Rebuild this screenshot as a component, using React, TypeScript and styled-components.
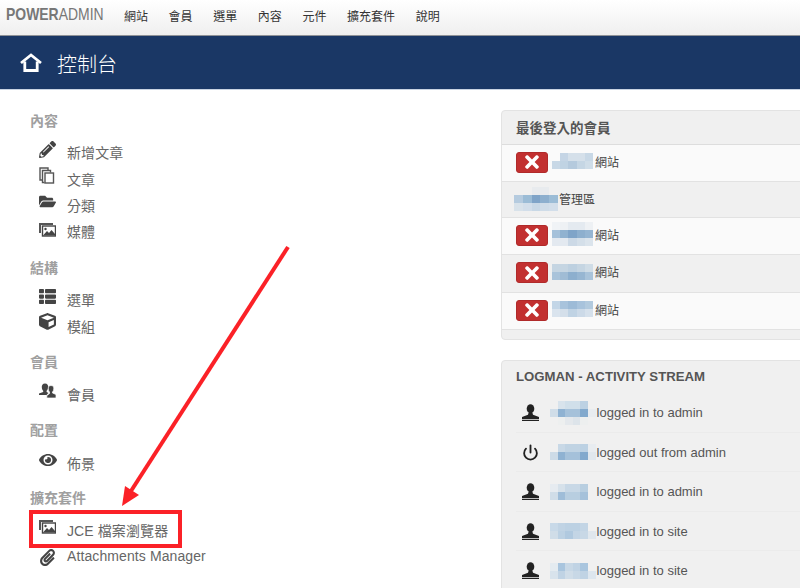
import styled, { createGlobalStyle } from "styled-components";
import { FaPencilAlt, FaFolderOpen, FaThList, FaCube, FaEye, FaPaperclip, FaTimes } from "react-icons/fa";
import { FiPower } from "react-icons/fi";
import type { ReactNode } from "react";

const cjk = `"Liberation Sans", "Noto Sans CJK TC", sans-serif`;

const GlobalStyle = createGlobalStyle`
  html, body {
    margin: 0;
    padding: 0;
    background: #fff;
    overflow: hidden;
  }
  body {
    font-family: ${cjk};
  }
`;

const Page = styled.div`
  position: relative;
  width: 800px;
  height: 588px;
  overflow: hidden;
`;

const TopBar = styled.nav`
  height: 30px;
  padding-bottom: 5px;
  display: flex;
  align-items: center;
  background: linear-gradient(#ffffff, #efefef);
  border-bottom: 1px solid #8f9297;
`;

const Logo = styled.div`
  width: 124px;
  padding-left: 6px;
  box-sizing: border-box;
  font-size: 17px;
  color: #777;
  white-space: nowrap;
  b {
    font-weight: 700;
  }
  span {
    display: inline-block;
    transform: scaleX(0.82);
    transform-origin: left center;
  }
`;

const NavItem = styled.a`
  font-size: 12px;
  color: #333;
  margin-right: 20.6px;
`;

const TitleBar = styled.header`
  height: 53px;
  display: flex;
  align-items: center;
  padding-left: 20px;
  background: #1a3765;
  border-bottom: 1px solid #c9d3e2;
  color: #fff;
  font-size: 20px;
  font-weight: 300;
  gap: 15px;
`;

const TitleText = styled.span`
  position: relative;
  top: 1px;
`;

const Content = styled.main`
  display: flex;
  padding-top: 20px;
`;

const SideColumn = styled.div`
  width: 501px;
  flex: none;
  padding: 3px 0 0 30px;
  box-sizing: border-box;
`;

const SectionTitle = styled.div<{ $gap: number }>`
  font-size: 14px;
  font-weight: 700;
  color: #a0a0a0;
  height: 16px;
  line-height: 16px;
  margin-bottom: ${(p) => p.$gap}px;
`;

const SectionList = styled.div<{ $after: number }>`
  margin-bottom: ${(p) => p.$after}px;
`;

const SideItem = styled.div`
  height: 26.4px;
  display: flex;
  align-items: center;
  font-size: 14px;
  letter-spacing: 0.1px;
  color: #666;
`;

const IconSlot = styled.span<{ $lift: number }>`
  width: 37px;
  padding-left: 9px;
  box-sizing: border-box;
  flex: none;
  color: #444;
  display: flex;
  align-items: center;
  position: relative;
  top: ${(p) => -p.$lift}px;
`;

const RightColumn = styled.div`
  flex: 1;
  min-width: 0;
`;

const Panel = styled.section`
  width: 320px;
  border: 1px solid #e3e3e3;
  border-radius: 4px 0 0 4px;
  background: #f0f0f0;
  box-sizing: border-box;
`;

const LoginPanel = styled(Panel)`
  height: 230px;
  margin-bottom: 20px;
`;

const PanelHead = styled.div`
  height: 31px;
  padding-bottom: 2px;
  display: flex;
  align-items: center;
  padding-left: 14px;
  font-size: 13.5px;
  font-weight: 700;
  color: #555;
  border-bottom: 1px solid #ddd;
`;

const LoginRow = styled.div<{ $odd: boolean; $admin: boolean; $h: number }>`
  height: ${(p) => p.$h}px;
  display: flex;
  align-items: center;
  padding: 0 0 ${(p) => (p.$admin ? "2px" : "4px")} ${(p) => (p.$admin ? "12px" : "14px")};
  box-sizing: border-box;
  font-size: 12px;
  color: #444;
  --cell-w: ${(p) => (p.$admin ? "8.8px" : "8.2px")};
  background: ${(p) => (p.$odd ? "#fafafa" : "#f0f0f0")};
  border-bottom: 1px solid #e2e2e2;
`;

const RowTail = styled.span<{ $admin: boolean }>`
  margin-left: ${(p) => (p.$admin ? "1px" : "2px")};
`;

const DeleteBadge = styled.span`
  width: 32px;
  height: 21px;
  flex: none;
  display: flex;
  align-items: center;
  justify-content: center;
  margin: 2px 4px 0 0;
  border-radius: 3px;
  box-sizing: border-box;
  border: 1px solid #b02a2a;
  background: #c23030;
  color: #fff;
  font-size: 20px;
`;

const Mosaic = styled.span`
  display: inline-block;
  flex: none;
`;

const MosaicRow = styled.span`
  display: flex;
`;

const MosaicCell = styled.i<{ $c: string }>`
  display: block;
  width: var(--cell-w, 8px);
  height: 8px;
  background: ${(p) => p.$c};
`;

const StreamHead = styled.div`
  padding: 8px 0 0 14px;
  height: 24px;
  font-size: 13.2px;
  font-weight: 700;
  color: #555;
`;

const StreamRow = styled.div`
  height: 39.5px;
  margin-left: 14px;
  padding-top: 1px;
  display: flex;
  align-items: center;
  font-size: 13px;
  color: #555;
  border-bottom: 1px solid #ebebeb;
  box-sizing: border-box;
  --cell-w: 7.6px;
`;

const StreamIcon = styled.span`
  width: 34px;
  padding-left: 6px;
  box-sizing: border-box;
  display: flex;
  color: #222;
  flex: none;
`;

const StreamText = styled.span`
  margin-left: 1px;
`;

const Highlight = styled.div`
  position: absolute;
  left: 29px;
  top: 510px;
  width: 153px;
  height: 38px;
  box-sizing: border-box;
  border: 4px solid #fb2127;
`;

const Arrow = styled.svg`
  position: absolute;
  left: 0;
  top: 0;
  pointer-events: none;
`;

function HomeIcon() {
  return (
    <svg width="22" height="20" viewBox="0 0 22 20" fill="none" stroke="#fff" strokeWidth="2.8">
      <path d="M1 10 L11 2 L21 10" />
      <path d="M4.8 8.5 V17.5 H17.2 V8.5" />
    </svg>
  );
}

function StackIcon() {
  return (
    <svg width="16" height="17" viewBox="0 0 16 17" fill="none" stroke="#555" strokeWidth="1.4">
      <path d="M3 13 H1 V1 H9 V3" />
      <path d="M5.5 15.5 H3.5 V3.5 H11.5 V5.5" />
      <rect x="6" y="6" width="8.5" height="10" fill="#fff" />
    </svg>
  );
}

function PicturesIcon() {
  return (
    <svg width="17" height="14" viewBox="0 0 17 14">
      <path d="M0 0 H14 V2 H2 V10 H0 Z" fill="#555" />
      <rect x="3.5" y="3" width="13" height="10" fill="#fff" stroke="#444" strokeWidth="1.4" />
      <circle cx="6.5" cy="6" r="1.2" fill="#444" />
      <path d="M4 12.5 L8 8 L10 10 L12.5 7 L16 11 V12.5 Z" fill="#444" />
    </svg>
  );
}

function UsersIcon() {
  return (
    <svg width="17" height="15" viewBox="0 0 17 15" fill="#444">
      <path d="M6 0.5 C8.4 0.5 9.4 2.4 9.2 4.3 C9 6 8.3 7.2 7.6 7.8 V9 L9.5 9.9 C8.6 10.6 8 11.2 7.6 12 H0 V10.6 L4.2 8.9 V7.8 C3.5 7.2 2.9 6 2.8 4.3 C2.6 2.4 3.6 0.5 6 0.5 Z" />
      <path d="M12 2.5 C14.2 2.5 15 4.2 14.8 5.9 C14.7 7.4 14.1 8.4 13.5 9 V10 L17 11.5 V15 H7.8 V12.6 L10.5 10.6 V9 C9.9 8.4 9.4 7.4 9.3 5.9 C9.1 4.2 9.8 2.5 12 2.5 Z" stroke="#fff" strokeWidth="0.7" />
    </svg>
  );
}

function PersonIcon() {
  return (
    <svg width="17" height="17" viewBox="0 0 17 17" fill="#222">
      <ellipse cx="8.5" cy="4.8" rx="3.8" ry="4.6" />
      <path d="M6.5 9 H10.5 L11 10.8 L17 13 V15.2 H0 V13 L6 10.8 Z" />
      <rect x="0" y="16" width="17" height="1" />
    </svg>
  );
}

type SideEntry = { icon: ReactNode; label: string; lift?: number };
type SideSection = { title: string; gap?: number; after?: number; items: SideEntry[] };

const sideMenu: SideSection[] = [
  {
    title: "內容",
    items: [
      { icon: <FaPencilAlt size={17} />, label: "新增文章" },
      { icon: <StackIcon />, label: "文章" },
      { icon: <FaFolderOpen size={17} />, label: "分類" },
      { icon: <PicturesIcon />, label: "媒體", lift: 1 },
    ],
  },
  {
    title: "結構",
    items: [
      { icon: <FaThList size={17} />, label: "選單" },
      { icon: <FaCube size={17} />, label: "模組", lift: 4 },
    ],
  },
  { title: "會員", items: [{ icon: <UsersIcon />, label: "會員" }] },
  { title: "配置", gap: 12, after: 13, items: [{ icon: <FaEye size={18} />, label: "佈景" }] },
  {
    title: "擴充套件",
    gap: 11,
    items: [
      { icon: <PicturesIcon />, label: "JCE 檔案瀏覽器" },
      { icon: <FaPaperclip size={17} />, label: "Attachments Manager", lift: -1 },
    ],
  },
];

// pixelated name blocks, each row is a list of cell colours
const loginRows = [
  { badge: true, tail: "網站", h: 37, cells: [["#fafafa", "#c5d5e5", "#d5e0ea", "#d5e0ea", "#c8d8e6"], ["#c8d8e6", "#c0d3e3", "#b5cadd", "#c5d6e4", "#cfdde8"]] },
  { badge: false, tail: "管理區", h: 36, cells: [["#f0f0f0", "#f0f0f0", "#e8ebee", "#e8ebee", "#f0f0f0"], ["#b5cbdf", "#9bbcd6", "#7fa4c8", "#8dafce", "#9bbcd6"], ["#d8e2ea", "#d2deea", "#c8d8e6", "#cfdce8", "#d2deea"]] },
  { badge: true, tail: "網站", h: 37, cells: [["#f0f3f6", "#eef1f4", "#e4eaf0", "#e4eaf0", "#eef1f4"], ["#a5c1da", "#90b2d0", "#7fa4c8", "#8dafce", "#95b5d2"], ["#e3e9f0", "#e3e9f0", "#ccd9e6", "#d4dfe9", "#dbe4ec"]] },
  { badge: true, tail: "網站", h: 38, cells: [["#c5d5e2", "#c5d5e2", "#bdd0e0", "#c5d5e2", "#cfdce6"], ["#a9c3da", "#a0bcd5", "#8dafce", "#97b6d2", "#a9c3da"]] },
  { badge: true, tail: "網站", h: 37, cells: [["#c3d6e7", "#a8c3dc", "#9dbbd7", "#a8c3dc", "#b2cade"], ["#dae4ee", "#d4dfea", "#c0d3e4", "#ccdae8", "#d6e1ec"]] },
];

const streamRows = [
  { out: false, text: "logged in to admin", cells: [["#f0f0f0", "#d8e3ec", "#d0dfea", "#d0dfea", "#bcd1e3", "#f0f0f0"], ["#d0dde8", "#8fb2d2", "#a5c1da", "#a5c1da", "#82a9cd", "#e8ecf0"], ["#f0f0f0", "#edefef", "#e4e8ec", "#dde4ea", "#edefef", "#f0f0f0"]] },
  { out: true, text: "logged out from admin", cells: [["#f0f0f0", "#c8d8e6", "#c0d3e3", "#c0d3e3", "#bcd1e3", "#e8ecf0"], ["#cddbe7", "#8fb2d2", "#a5c1da", "#a5c1da", "#82a9cd", "#e0e7ed"]] },
  { out: false, text: "logged in to admin", cells: [["#e6ebf0", "#d6e1ea", "#c8d8e6", "#c8d8e6", "#b8cee0", "#f0f0f0"], ["#d0dde8", "#9fbdd8", "#b8cee0", "#b8cee0", "#a5c1da", "#f0f0f0"]] },
  { out: false, text: "logged in to site", cells: [["#c8d9e8", "#c0d3e4", "#bcd1e3", "#bcd1e3", "#c3d5e5", "#f0f0f0"], ["#d0dde8", "#bcd1e3", "#b0c9df", "#c3d5e5", "#c8d8e6", "#e0e7ed"]] },
  { out: false, text: "logged in to site", cells: [["#e4ebf0", "#a9c5de", "#c8d8e6", "#c0d3e4", "#a9c5de", "#f0f0f0"], ["#d8e3ec", "#c0d3e4", "#d0dde8", "#c8d8e6", "#c0d3e4", "#dde6ee"]] },
];

function Blur({ cells }: { cells: string[][] }) {
  return (
    <Mosaic>
      {cells.map((row, i) => (
        <MosaicRow key={i}>
          {row.map((c, j) => (
            <MosaicCell key={j} $c={c} />
          ))}
        </MosaicRow>
      ))}
    </Mosaic>
  );
}

export default function App() {
  return (
    <Page>
      <GlobalStyle />
      <TopBar>
        <Logo>
          <span>
            <b>POWER</b>ADMIN
          </span>
        </Logo>
        {["網站", "會員", "選單", "內容", "元件", "擴充套件", "說明"].map((n) => (
          <NavItem key={n}>{n}</NavItem>
        ))}
      </TopBar>
      <TitleBar>
        <HomeIcon />
        <TitleText>控制台</TitleText>
      </TitleBar>
      <Content>
        <SideColumn>
          {sideMenu.map((s) => (
            <div key={s.title}>
              <SectionTitle $gap={s.gap ?? 10}>{s.title}</SectionTitle>
              <SectionList $after={s.after ?? 15.5}>
                {s.items.map((it) => (
                  <SideItem key={it.label}>
                    <IconSlot $lift={it.lift ?? 3}>{it.icon}</IconSlot>
                    {it.label}
                  </SideItem>
                ))}
              </SectionList>
            </div>
          ))}
        </SideColumn>
        <RightColumn>
          <LoginPanel>
            <PanelHead>最後登入的會員</PanelHead>
            {loginRows.map((r, i) => (
              <LoginRow key={i} $odd={i % 2 === 0} $admin={!r.badge} $h={r.h}>
                {r.badge && (
                  <DeleteBadge>
                    <FaTimes />
                  </DeleteBadge>
                )}
                <Blur cells={r.cells} />
                <RowTail $admin={!r.badge}>{r.tail}</RowTail>
              </LoginRow>
            ))}
          </LoginPanel>
          <Panel>
            <StreamHead>LOGMAN - ACTIVITY STREAM</StreamHead>
            {streamRows.map((r, i) => (
              <StreamRow key={i}>
                <StreamIcon>{r.out ? <FiPower size={17} strokeWidth={2.6} /> : <PersonIcon />}</StreamIcon>
                <Blur cells={r.cells} />
                <StreamText>{r.text}</StreamText>
              </StreamRow>
            ))}
          </Panel>
        </RightColumn>
      </Content>
      <Highlight />
      <Arrow width="800" height="588" viewBox="0 0 800 588">
        <line x1="288" y1="247" x2="131" y2="491" stroke="#fb2127" strokeWidth="4" />
        <polygon points="122,506 125,486 139,495" fill="#fb2127" />
      </Arrow>
    </Page>
  );
}
